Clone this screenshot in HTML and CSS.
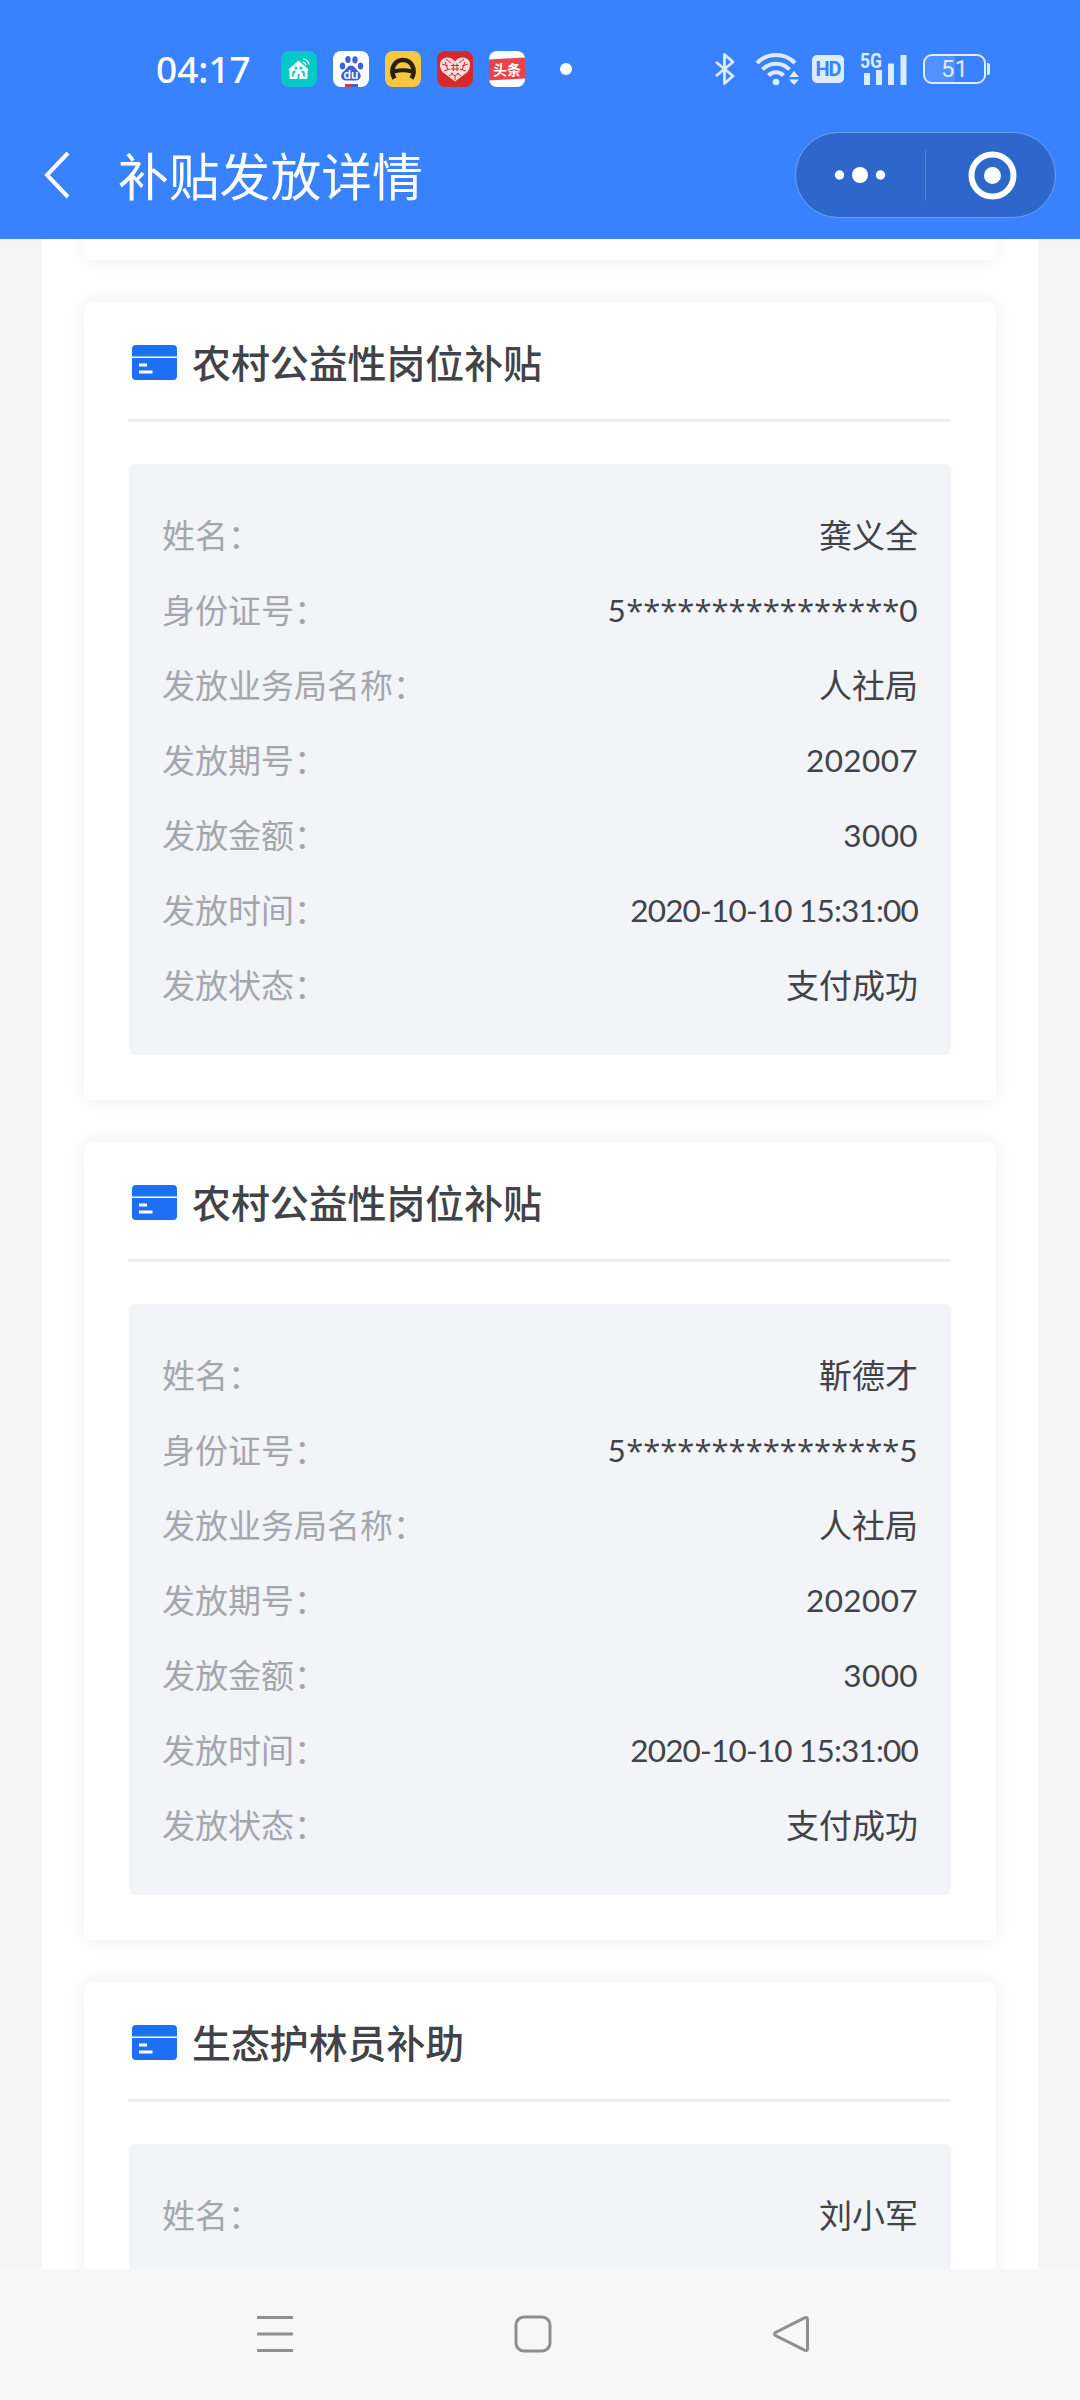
FILE: index.html
```html
<!DOCTYPE html>
<html lang="zh-CN">
<head>
  <meta charset="utf-8">
  <title>补贴发放详情</title>
  <link rel="stylesheet" href="styles.css">
</head>
<body>

  <!-- card icon, reused by every card title -->
  <svg class="sprite">
    <symbol id="iconCard" viewBox="0 0 45 35">
      <path d="M4 0h37a4 4 0 0 1 4 4v7.500H0V4a4 4 0 0 1 4-4z" fill="#1d70f5"/>
      <path d="M0 13h45v18a4 4 0 0 1-4 4H4a4 4 0 0 1-4-4z" fill="#1d70f5"/>
      <path d="M7 20h8M7 27h13.500" stroke="#fff" stroke-width="2.800"/>
    </symbol>
  </svg>

  <div class="header">
    <div class="status">
      <span class="time">04:17</span>
      <div class="apps">
        <svg width="36" height="36" viewBox="0 0 36 36">
          <rect width="36" height="36" rx="8" fill="#06c8c6"/>
          <path d="M17.500 9.500L27.500 18.500l-1 1v7a1.500 1.500 0 0 1-1.500 1.500H10a1.500 1.500 0 0 1-1.500-1.500v-7l-1-1z" fill="#fff"/>
          <path d="M12 25.500V23c0-1.500 1-2.500 2.500-2.500M23 25.500V23c0-1.500-1-2.500-2.500-2.500M17.500 28v-5" stroke="#06c8c6" stroke-width="1.800" fill="none"/>
          <circle cx="15" cy="17" r="1.500" fill="#06c8c6"/>
          <circle cx="20" cy="17" r="1.500" fill="#06c8c6"/>
          <path d="M21.500 11a4 4 0 0 1 3.500 3.300M22 8a7 7 0 0 1 6 5.500" stroke="#fff" stroke-width="1.200" fill="none"/>
        </svg>
        <svg width="36" height="36" viewBox="0 0 36 36">
          <rect width="36" height="36" rx="8" fill="#fff"/>
          <g fill="#3d62d8">
            <ellipse cx="9.500" cy="15" rx="2.700" ry="3.500"/>
            <ellipse cx="15" cy="8.500" rx="2.700" ry="3.600"/>
            <ellipse cx="22" cy="8.800" rx="2.700" ry="3.600"/>
            <ellipse cx="27.500" cy="15" rx="2.700" ry="3.500"/>
            <path d="M18 14.500c3.500 0 4.500 3.500 7 5.500 5 4 2.500 10-2.500 9.500h-9c-5.500.500-7.500-5.500-2.500-9.500 2.500-2 3.500-5.500 7-5.500z"/>
          </g>
          <text x="18" y="27.500" class="duText">du</text>
          <path d="M12 33h6v3h-6z" fill="#d9343a"/>
          <path d="M18 33h7v3h-7z" fill="#3d62d8"/>
        </svg>
        <svg width="36" height="36" viewBox="0 0 36 36">
          <rect width="36" height="36" rx="8" fill="#f6c73f"/>
          <path d="M9.500 27.500C4 18 10 9 18 9s14 9 8.500 18.500" stroke="#26200f" stroke-width="4.500" fill="none"/>
          <path d="M9 20.500q9-2.500 18 0" stroke="#26200f" stroke-width="4" fill="none"/>
        </svg>
        <svg width="36" height="36" viewBox="0 0 36 36">
          <rect width="36" height="36" rx="8" fill="#d5292c"/>
          <path d="M18 30.500L5.500 21C0 13 4 6.500 10.500 6.500c3.500 0 5.500 1.500 7.500 4 2-2.500 4-4 7.500-4C32 6.500 36 13 30.500 21z" fill="#f7dede"/>
          <path d="M16.300 12.500v7.500M20 12.500v7.500M14 14.500h8M14 18h8M9 8l5 4M27 8l-5 4M5 13l6 2M31 13l-6 2M7 20l6-2M29 20l-6-2M12 25l4-3M24 25l-4-3M18 24v5M8 11l3 8M28 11l-3 8M14 22l4 3 4-3" stroke="#d5292c" stroke-width="1" fill="none"/>
        </svg>
        <svg width="36" height="36" viewBox="0 0 36 36">
          <rect width="36" height="36" rx="8" fill="#fff"/>
          <path d="M0 8.500l36-2v21L0 29.500z" fill="#e8434a"/>
          <text x="18" y="23.500" class="newsText">头条</text>
        </svg>
      </div>
      <span class="more"></span>
      <div class="signals">
        <svg width="22" height="34" viewBox="0 0 22 34" class="bluetooth">
          <path d="M2 10l17 14-8.500 7.500v-29L19 10 2 24" stroke="#dcecff" stroke-width="2.800" fill="none" stroke-linejoin="round"/>
        </svg>
        <svg width="46" height="34" viewBox="0 0 46 34" class="wifi">
          <g stroke="#dcecff" stroke-width="4" fill="none">
            <path d="M2 11a26.500 26.500 0 0 1 38 0"/>
            <path d="M7.500 17.500a18.500 18.500 0 0 1 27 0"/>
            <path d="M13.500 23.500a10.500 10.500 0 0 1 15 0"/>
          </g>
          <circle cx="21" cy="30" r="3.300" fill="#dcecff"/>
          <path d="M39 19l5 6H34zM39 33l5-5.500H34z" fill="#dcecff"/>
        </svg>
        <span class="hd">HD</span>
        <svg width="48" height="36" viewBox="0 -2 48 36" class="cell">
          <text x="0" y="15" textLength="22" lengthAdjust="spacingAndGlyphs" class="cellText">5G</text>
          <path d="M4 20h6v12H4zM16 17h6v15h-6zM28 10.500h6V32h-6zM40.500 2h6v30h-6z" fill="#dcecff"/>
        </svg>
        <span class="battery">51</span><span class="batteryTip"></span>
      </div>
    </div>

    <div class="titlebar">
      <svg width="28" height="50" viewBox="0 0 28 50" class="back">
        <path d="M25 3L4 25l21 22" stroke="#fff" stroke-width="4" fill="none"/>
      </svg>
      <h1>补贴发放详情</h1>
      <div class="capsule">
        <svg width="129" height="84" viewBox="0 0 129 84" fill="#fff">
          <circle cx="43.500" cy="42" r="4.700"/>
          <circle cx="64" cy="42" r="8"/>
          <circle cx="84.500" cy="42" r="4.700"/>
        </svg>
        <span class="line"></span>
        <svg width="129" height="84" viewBox="0 0 129 84">
          <circle cx="66.500" cy="42.500" r="21" stroke="#fff" stroke-width="6" fill="none"/>
          <circle cx="66.500" cy="42.500" r="8.500" fill="#fff"/>
        </svg>
      </div>
    </div>
  </div>

  <div class="container">
    <div class="list">
      <div class="card previous"></div>

      <div class="card">
        <h2><svg class="cardIcon"><use href="#iconCard"/></svg>农村公益性岗位补贴</h2>
        <div class="info">
          <div class="row"><label>姓名：</label><span>龚义全</span></div>
          <div class="row"><label>身份证号：</label><span class="num">5<i>****************</i>0</span></div>
          <div class="row"><label>发放业务局名称：</label><span>人社局</span></div>
          <div class="row"><label>发放期号：</label><span class="num">202007</span></div>
          <div class="row"><label>发放金额：</label><span class="num">3000</span></div>
          <div class="row"><label>发放时间：</label><span class="num date">2020-10-10 15:31:00</span></div>
          <div class="row"><label>发放状态：</label><span>支付成功</span></div>
        </div>
      </div>

      <div class="card">
        <h2><svg class="cardIcon"><use href="#iconCard"/></svg>农村公益性岗位补贴</h2>
        <div class="info">
          <div class="row"><label>姓名：</label><span>靳德才</span></div>
          <div class="row"><label>身份证号：</label><span class="num">5<i>****************</i>5</span></div>
          <div class="row"><label>发放业务局名称：</label><span>人社局</span></div>
          <div class="row"><label>发放期号：</label><span class="num">202007</span></div>
          <div class="row"><label>发放金额：</label><span class="num">3000</span></div>
          <div class="row"><label>发放时间：</label><span class="num date">2020-10-10 15:31:00</span></div>
          <div class="row"><label>发放状态：</label><span>支付成功</span></div>
        </div>
      </div>

      <div class="card">
        <h2><svg class="cardIcon"><use href="#iconCard"/></svg>生态护林员补助</h2>
        <div class="info">
          <div class="row"><label>姓名：</label><span>刘小军</span></div>
        </div>
      </div>
    </div>
  </div>

  <div class="navbar">
    <svg width="40" height="40" viewBox="0 0 40 40"><path d="M2 3.500h36M2 20h36M2 36.500h36"/></svg>
    <svg width="40" height="40" viewBox="0 0 40 40"><rect x="3" y="3" width="34" height="34" rx="8"/></svg>
    <svg width="40" height="40" viewBox="0 0 40 40"><path d="M33.500 3.800L4.500 18.500q-2 1.500 0 3l29 14.700q3 1 3-1.500V5.300q0-2.500-3-1.500z"/></svg>
  </div>

</body>
</html>
```

FILE: styles.css
```css
* {
  box-sizing: border-box;
}

body {
  margin: 0;
  width: 1080px;
  height: 2400px;
  display: flex;
  flex-direction: column;
  overflow: hidden;
  background: #f5f5f5;
  font-family: "Noto Sans CJK SC", sans-serif;
  color: #424348;
}

svg {
  display: block;
  flex-shrink: 0;
}

.sprite {
  display: none;
}

/* header */
.header {
  height: 239px;
  flex-shrink: 0;
  background: #3982ff;
  color: white;
}

.status {
  display: flex;
  align-items: center;
  height: 132px;
  padding: 6px 90px 0 156px;
}

.time {
  width: 125px;
  font-family: "Noto Sans", sans-serif;
  font-size: 37px;
  font-weight: 500;
  line-height: 50px;
  white-space: nowrap;
}

.apps {
  display: flex;
  gap: 16px;
}

.duText {
  fill: white;
  font-family: "Inter", sans-serif;
  font-size: 12px;
  font-weight: 600;
  text-anchor: middle;
}

.newsText {
  fill: white;
  font-size: 14px;
  font-weight: 700;
  text-anchor: middle;
}

.more {
  width: 12px;
  height: 12px;
  margin-left: 35px;
  border-radius: 50%;
  background: white;
}

.signals {
  display: flex;
  align-items: center;
  margin-left: auto;
  color: #dcecff;
}

.wifi {
  margin-left: 19px;
}

.hd {
  width: 32px;
  height: 28px;
  margin-left: 11px;
  border-radius: 5px;
  background: #dcecff;
  color: #3982ff;
  font-family: Roboto, sans-serif;
  font-size: 20px;
  font-weight: 700;
  line-height: 29px;
  text-align: center;
  letter-spacing: -1px;
}

.cell {
  margin-left: 16px;
}

.cellText {
  fill: #dcecff;
  font-family: Roboto, sans-serif;
  font-size: 20px;
  font-weight: 700;
}

.battery {
  width: 63px;
  height: 30px;
  margin-left: 15px;
  border: 2px solid #dcecff;
  border-radius: 9px;
  background: linear-gradient(90deg, #4f91ff 51%, transparent 51%);
  font-family: Roboto, sans-serif;
  font-size: 24px;
  line-height: 27px;
  text-align: center;
}

.batteryTip {
  width: 3px;
  height: 12px;
  margin-left: 1px;
  border-radius: 0 2px 2px 0;
  background: #dcecff;
}

.titlebar {
  display: flex;
  align-items: center;
  height: 86px;
  padding: 0 24px 0 43px;
}

.titlebar h1 {
  margin: 0 auto 0 47px;
  font-size: 50.800px;
  font-weight: 400;
  line-height: 84px;
  height: 86px;
}

.capsule {
  display: flex;
  align-items: center;
  width: 261px;
  height: 86px;
  border: 1px solid #6b9ff5;
  border-radius: 43px;
  background: #2e67cb;
}

.capsule .line {
  width: 1px;
  height: 51px;
  background: #5284da;
}

/* cards */
.container {
  flex: 1;
  min-height: 0;
  overflow: hidden;
  padding: 0 42px;
}

.list {
  display: flex;
  flex-direction: column;
  gap: 42px;
  padding: 0 42px;
  background: white;
}

.card {
  flex-shrink: 0;
  height: 798px;
  padding: 0 45px 0 44px;
  border-radius: 8px;
  background: white;
  box-shadow: 0 0 18px rgba(0, 0, 0, 0.07);
}

.card.previous {
  height: 21px;
  border-radius: 0 0 8px 8px;
}

.card h2 {
  display: flex;
  align-items: center;
  height: 120px;
  margin: 0 0 42px;
  padding-left: 4px;
  border-bottom: 3px solid #efefef;
  font-size: 38.900px;
  font-weight: 500;
}

.cardIcon {
  width: 45px;
  height: 35px;
  margin: 3px 15px 0 0;
}

.info {
  height: 591px;
  margin-left: 1px;
  padding: 33px;
  border-radius: 6px;
  background: #f2f4f8;
}

.row {
  display: flex;
  justify-content: space-between;
  height: 75px;
  font-size: 33px;
  line-height: 75px;
}

.row label {
  color: #a5a6ad;
}

.num {
  font-family: Lato, sans-serif;
  font-size: 31.500px;
  line-height: 77px;
  letter-spacing: 0.400px;
}

.num i {
  font-family: "Open Sans", sans-serif;
  font-size: 31px;
  font-style: normal;
  letter-spacing: 0;
}

.num.date {
  letter-spacing: -0.800px;
}

/* system buttons */
.navbar {
  display: flex;
  justify-content: space-between;
  height: 131px;
  padding: 45px 269px 0 255px;
  background: #f7f7f7;
}

.navbar svg {
  fill: none;
  stroke: #8f8f8f;
  stroke-width: 3;
}
```
